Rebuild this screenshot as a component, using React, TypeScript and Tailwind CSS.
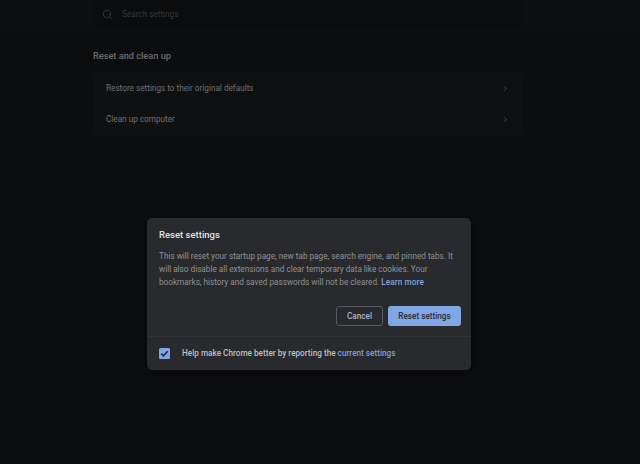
import React from 'react';
import { ChevronRight, Search } from 'lucide-react';

const font = { fontFamily: 'Roboto, sans-serif' };

function SettingsRow({ label }: { label: string }) {
  return (
    <div className="flex h-[31px] items-center justify-between pl-[13px] pr-[14px]">
      <span className="text-[8.2px] text-[#6e7073]">{label}</span>
      <ChevronRight className="h-[7px] w-[7px] text-[#5a5c5f]" strokeWidth={2.5} />
    </div>
  );
}

export default function App() {
  return (
    <div style={font} className="relative h-[464px] w-[640px] overflow-hidden bg-[#0c0d0f]">
      {/* Pagina de configuracoes atras do overlay */}
      <div className="h-[30px] border-b border-[#0e0f11] bg-[#0d0e10] pl-[93px] pr-[117px]">
        <div className="flex h-[28px] items-center gap-[9px] bg-[#0b0c0e] pl-[9px]">
          <Search className="h-[11px] w-[11px] text-[#3f4144]" strokeWidth={1.6} />
          <span className="text-[8.2px] text-[#36383b]">Search settings</span>
        </div>
      </div>
      <div className="pl-[93px] pr-[117px] pt-[20px]">
        <h2 className="text-[9.2px] leading-[12px] font-medium text-[#6b6d70]">Reset and clean up</h2>
        <div className="mt-[11px] rounded-[3px] bg-[#0f1012]">
          <SettingsRow label="Restore settings to their original defaults" />
          <SettingsRow label="Clean up computer" />
        </div>
      </div>

      {/* Dialogo */}
      <div className="absolute left-[147px] top-[218px] h-[152px] w-[324px] rounded-[5px] bg-[#292a2d] shadow-[0_2px_10px_rgba(0,0,0,0.5)]">
        <div className="px-[12px] pt-[10px]">
          <h1 className="text-[9.5px] leading-[14px] font-medium text-[#dfe1e4]">Reset settings</h1>
          <p className="mt-[8px] text-[8.2px] leading-[13px] text-[#909295]">
            This will reset your startup page, new tab page, search engine, and pinned tabs. It will also disable all extensions and clear temporary data like cookies. Your bookmarks, history and saved passwords will not be cleared. <span className="font-medium tracking-[0.1px] text-[#7ea3de]">Learn more</span>
          </p>
          <div className="mt-[17px] flex justify-end gap-[5px]">
            <button className="h-[20px] w-[47px] rounded-[3px] border border-[#55585c] text-[8.2px] font-medium text-[#a3b4cf]">Cancel</button>
            <button className="mr-[-2px] h-[20px] w-[73px] rounded-[3px] bg-[#80a6e6] text-[8.2px] font-medium text-[#2b2e35]">Reset settings</button>
          </div>
        </div>
        <div className="mt-[10px] flex h-[33px] items-center gap-[12px] border-t border-[#323336] pl-[12px]">
          <span className="flex h-[11px] w-[11px] items-center justify-center rounded-[1.5px] bg-[#80a6e6]">
            <svg viewBox="0 0 10 10" className="h-[11px] w-[11px]" fill="none" stroke="#292a2d" strokeWidth="1.5">
              <path d="M2 5.2 L4.1 7.2 L8 2.9" />
            </svg>
          </span>
          <span className="text-[8.2px] font-medium text-[#bcbfc2]">
            Help make Chrome better by reporting the <span className="text-[#7e9fd6]">current settings</span>
          </span>
        </div>
      </div>
    </div>
  );
}
